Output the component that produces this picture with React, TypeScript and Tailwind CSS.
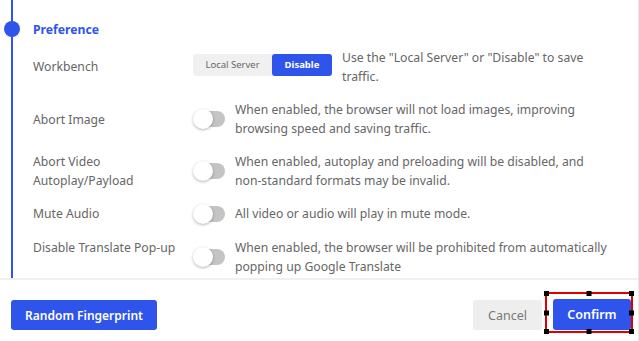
import React from "react";

const font = { fontFamily: '"Noto Sans", "Liberation Sans", sans-serif' };

function Toggle() {
  return (
    <div className="relative w-[32px] h-[16px] shrink-0">
      <div className="absolute left-[6px] right-0 top-0 h-[16px] rounded-full bg-[#c4c4c4]" />
      <div className="absolute left-0 top-[-2px] w-[20px] h-[20px] rounded-full bg-white shadow-[0_1px_3px_rgba(0,0,0,0.3)]" />
    </div>
  );
}

function Row({
  label,
  desc,
  align = "items-center",
  className = "",
}: {
  label: React.ReactNode;
  desc: React.ReactNode;
  align?: string;
  className?: string;
}) {
  return (
    <div className={`flex ${align} ${className}`}>
      <div className="w-[160px] shrink-0 pr-2">{label}</div>
      <div className="flex items-center">
        <Toggle />
        <div className="ml-[10px] w-[375px]">{desc}</div>
      </div>
    </div>
  );
}

function Handle({ className }: { className: string }) {
  return <div className={`absolute w-[5px] h-[5px] bg-black ${className}`} />;
}

export default function App() {
  return (
    <div
      className="w-[639px] h-[341px] bg-white flex flex-col overflow-hidden text-[12.2px] leading-[19px] text-[#666] border-r border-[#e8e8e8]"
      style={font}
    >
      {/* Settings body */}
      <div className="relative flex-1 pl-[33px]">
        <div className="absolute left-[11px] top-0 bottom-0 w-[2px] bg-[#2f54eb]" />
        <div className="absolute left-[4px] top-[21px] w-[16px] h-[16px] rounded-full bg-[#2f54eb]" />

        <div className="pt-[20px] font-bold text-[#2f54eb] leading-[20px]">Preference</div>

        {/* Workbench */}
        <div className="flex items-start mt-[8px]">
          <div className="w-[160px] shrink-0 pt-[9px]">Workbench</div>
          <div className="flex items-start">
            <div className="flex mt-[6px] h-[22px] rounded-[3px] bg-[#f0f0f0] text-[9.5px] leading-[22px]">
              <div className="w-[79px] text-center text-[#666]">Local Server</div>
              <div className="w-[60px] text-center rounded-[3px] bg-[#2f54eb] text-white font-bold">Disable</div>
            </div>
            <div className="ml-[10px] w-[250px]">Use the "Local Server" or "Disable" to save traffic.</div>
          </div>
        </div>

        <Row
          className="mt-[14px]"
          label="Abort Image"
          desc="When enabled, the browser will not load images, improving browsing speed and saving traffic."
        />
        <Row
          className="mt-[14px]"
          label="Abort Video Autoplay/Payload"
          desc="When enabled, autoplay and preloading will be disabled, and non-standard formats may be invalid."
        />
        <Row className="mt-[14px]" label="Mute Audio" desc="All video or audio will play in mute mode." />
        <Row
          className="mt-[15px]"
          align="items-start"
          label="Disable Translate Pop-up"
          desc="When enabled, the browser will be prohibited from automatically popping up Google Translate"
        />
      </div>

      {/* Footer */}
      <div className="h-[63px] shrink-0 border-t-2 border-[#f0f0f0] flex items-start justify-between pt-[20px] pl-[11px] pr-[7px]">
        <button className="h-[30px] w-[146px] rounded-[3px] bg-[#2f54eb] text-white font-semibold text-[12px]">
          Random Fingerprint
        </button>
        <div className="flex items-start gap-[11px]">
          <button className="h-[30px] w-[69px] rounded-[3px] bg-[#eeeeee] text-[#777] text-[12.5px]">Cancel</button>
          <div className="relative">
            <button className="h-[31px] w-[78px] mt-[-1px] rounded-[3px] bg-[#2f54eb] text-white font-semibold text-[12.5px]">
              Confirm
            </button>
            <div className="absolute left-[-8px] right-[-2px] top-[-8px] bottom-[-3px] border-2 border-[#e00000]">
              <Handle className="left-[-3px] top-[-3px]" />
              <Handle className="left-1/2 -translate-x-1/2 top-[-3px]" />
              <Handle className="right-[-3px] top-[-3px]" />
              <Handle className="left-[-3px] top-1/2 -translate-y-1/2" />
              <Handle className="right-[-3px] top-1/2 -translate-y-1/2" />
              <Handle className="left-[-3px] bottom-[-3px]" />
              <Handle className="left-1/2 -translate-x-1/2 bottom-[-3px]" />
              <Handle className="right-[-3px] bottom-[-3px]" />
            </div>
          </div>
        </div>
      </div>
    </div>
  );
}
